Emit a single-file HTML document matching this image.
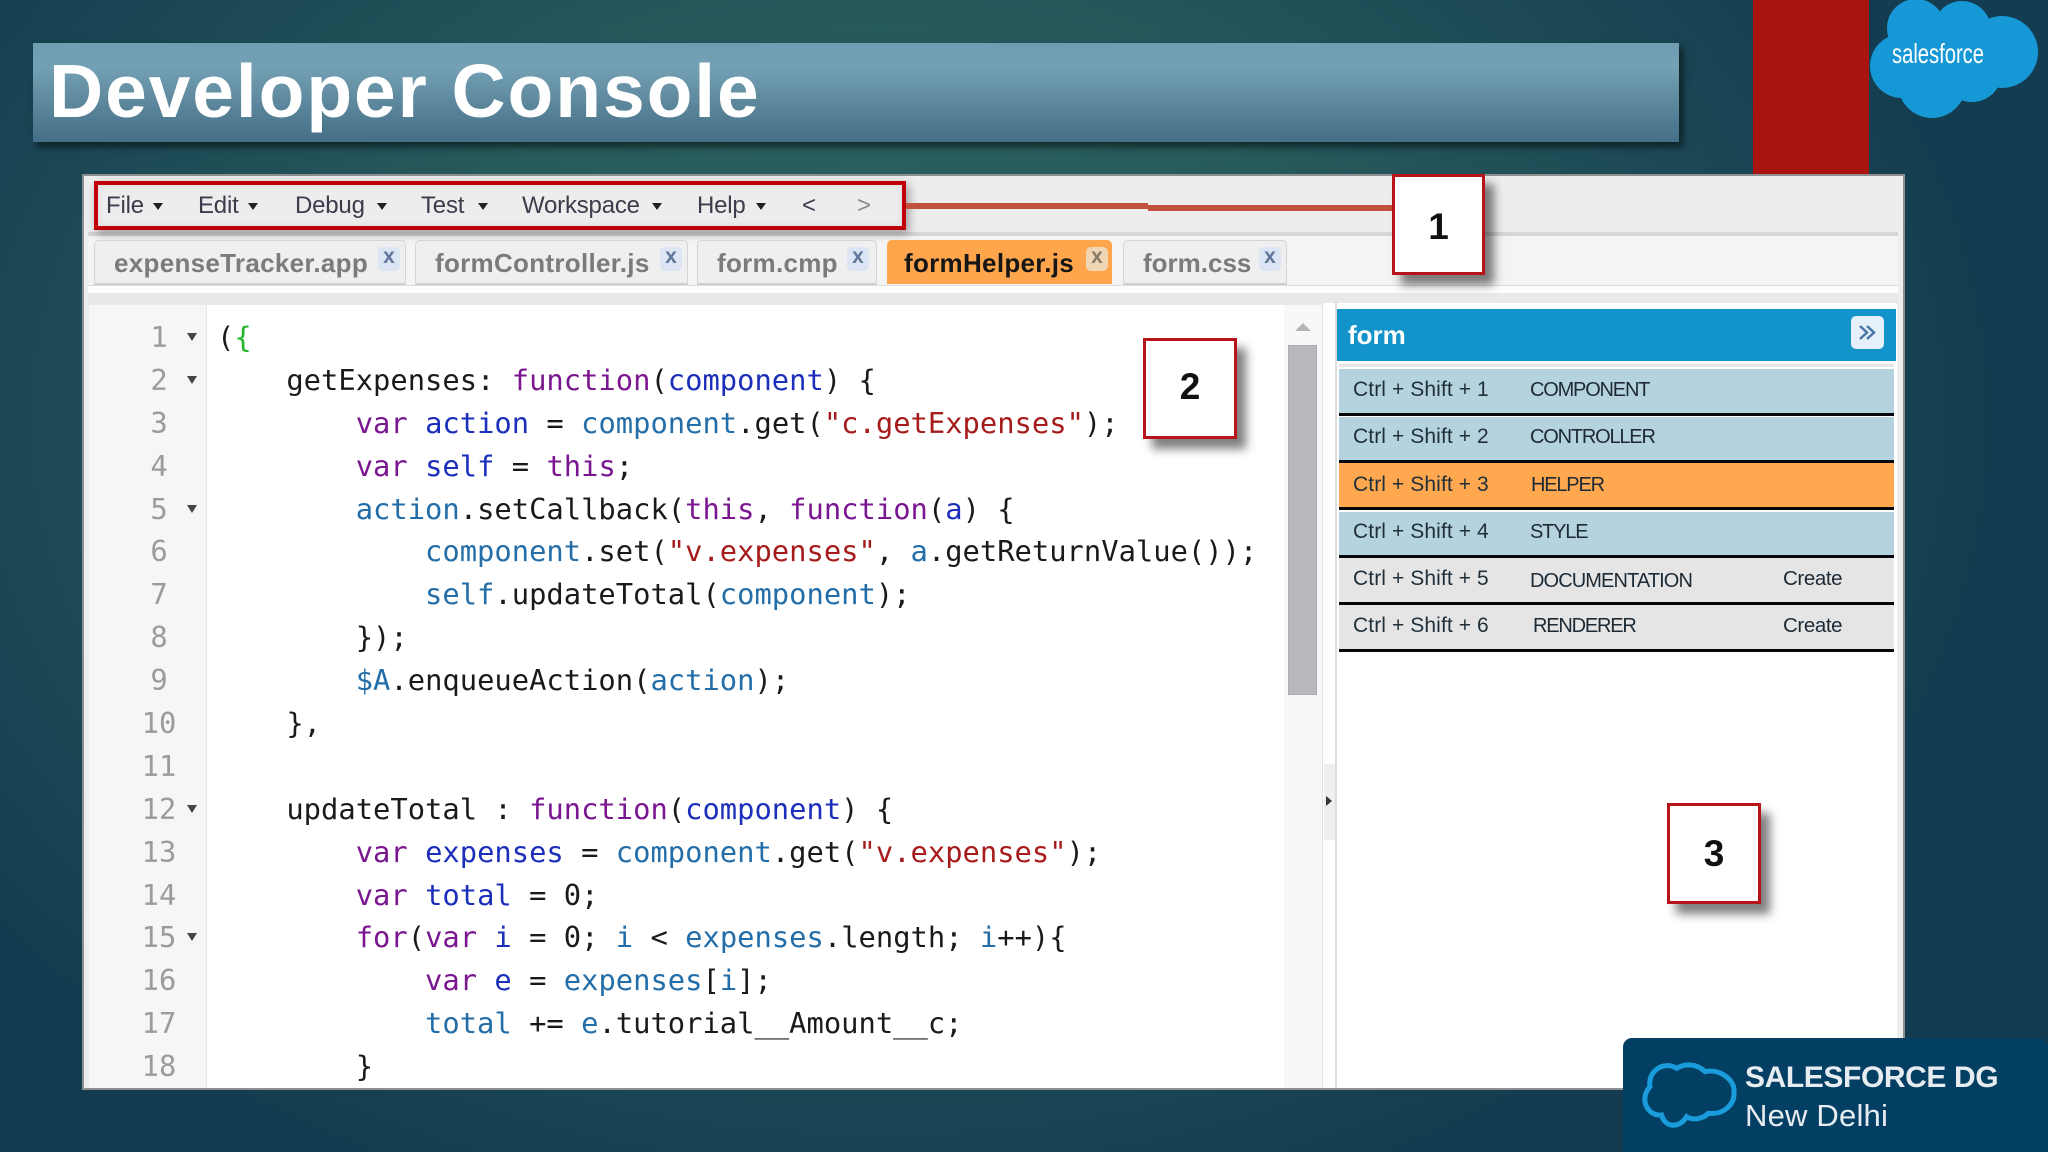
<!DOCTYPE html>
<html lang="en"><head><meta charset="utf-8"><title>Developer Console</title>
<style>
html,body{margin:0;padding:0;width:2048px;height:1152px;overflow:hidden}
body{position:relative;background:radial-gradient(ellipse 1120px 830px at 880px 420px,#2f6664 0,#275a5c 45%,#143c50 100%);font-family:"Liberation Sans",sans-serif}
.a{position:absolute}
.t{position:absolute;white-space:pre;line-height:1}
#title{left:33px;top:43px;width:1646px;height:99px;background:linear-gradient(#6f9db2 0,#73a0b4 25%,#5a8499 65%,#456e88 100%);box-shadow:4px 5px 7px rgba(0,0,0,.55)}
#win{left:82px;top:174px;width:1823px;height:916px;background:#ededed;border:0;box-shadow:inset 0 0 0 2px #8d8f90}
.menu{top:194px;font-size:24px;color:#3c3c4c;letter-spacing:-.2px}
.car{position:absolute;top:203px;width:0;height:0;border-left:5px solid transparent;border-right:5px solid transparent;border-top:7px solid #222}
.tab{position:absolute;top:240px;height:45px;background:#efefef;border:1px solid #d4d4d4;border-bottom:2px solid #cfcfcf;border-radius:5px 5px 0 0;box-sizing:border-box}
.tt{top:250px;font-size:26px;font-weight:bold;color:#7b7b7b;letter-spacing:.3px}
.x{position:absolute;top:247px;width:22px;height:24px;background:#dbe5f4;border-radius:5px;color:#62759a;font-size:21px;font-weight:bold;text-align:center;line-height:20px}
.num{position:absolute;background:#fff;border:3px solid #b8131a;box-sizing:border-box;box-shadow:9px 10px 9px rgba(0,0,0,.5);font-weight:bold;font-size:37px;color:#111;text-align:center}
.l{position:absolute;left:217px;white-space:pre;font-family:"DejaVu Sans Mono","Liberation Mono",monospace;font-size:28.8px;line-height:43px;color:#1a1a1a;margin-top:1px}
.n{position:absolute;width:60px;left:129px;text-align:center;font-family:"DejaVu Sans Mono","Liberation Mono",monospace;font-size:28.8px;line-height:43px;color:#9b9b9b;margin-top:1px}
.f{position:absolute;left:187px;width:0;height:0;border-left:5px solid transparent;border-right:5px solid transparent;border-top:8px solid #444}
.k{color:#7a1790}.v{color:#1c2fbb}.d{color:#236ea8}.s{color:#a61c1c}.g{color:#27b52f}
.row{position:absolute;left:1339px;width:555px;height:46px;border-bottom:3px solid #05070a;box-sizing:content-box}
.ks{position:absolute;left:1353px;font-size:21px;color:#20303a;letter-spacing:.1px;line-height:1}
.lb{position:absolute;left:1530px;font-size:20px;color:#1d2a34;letter-spacing:-1.2px;line-height:1}
.cr{position:absolute;left:1783px;font-size:20.5px;color:#1d2a34;letter-spacing:-.4px;line-height:1}
</style></head><body>

<div class="a" id="title"></div>
<div class="t" style="left:49px;top:54px;font-size:75px;font-weight:bold;color:#fff;letter-spacing:1.9px">Developer Console</div>

<div class="a" style="left:1753px;top:0;width:116px;height:176px;background:#a91410"></div>

<svg class="a" style="left:1860px;top:0" width="188" height="125" viewBox="1860 0 188 125">
<g fill="#1798d6"><circle cx="1916" cy="28" r="29"/><circle cx="1962" cy="30" r="29"/><circle cx="2002" cy="52" r="36"/><circle cx="1972" cy="72" r="30"/><circle cx="1932" cy="84" r="34"/><circle cx="1902" cy="66" r="32"/><rect x="1905" y="30" width="90" height="60"/></g>
<text x="1892" y="63" font-family="Liberation Sans" font-size="28" fill="#fff" textLength="92" lengthAdjust="spacingAndGlyphs">salesforce</text>
</svg>

<div class="a" id="win"></div>

<div class="a" style="left:88px;top:232px;width:1810px;height:4px;background:#d6d6d6"></div>
<div class="a" style="left:88px;top:236px;width:1810px;height:49px;background:#f4f4f4"></div>
<div class="a" style="left:88px;top:285px;width:1810px;height:7px;background:#fdfdfd;border-top:1px solid #ddd"></div>
<div class="a" style="left:88px;top:293px;width:1810px;height:12px;background:#e9e9e9"></div>

<!-- menu -->
<div class="a" style="left:94px;top:181px;width:812px;height:49px;box-sizing:border-box;border:4px solid #c00008;box-shadow:3px 4px 9px rgba(0,0,0,.35),inset 0 0 8px rgba(0,0,0,.08)"></div>
<div class="a" style="left:906px;top:203px;width:242px;height:6px;background:#c2503a"></div>
<div class="a" style="left:1148px;top:205px;width:244px;height:6px;background:#c2503a"></div>
<div class="t menu" style="left:106px">File</div><i class="car" style="left:153px"></i>
<div class="t menu" style="left:198px">Edit</div><i class="car" style="left:248px"></i>
<div class="t menu" style="left:295px">Debug</div><i class="car" style="left:377px"></i>
<div class="t menu" style="left:421px">Test</div><i class="car" style="left:478px"></i>
<div class="t menu" style="left:522px">Workspace</div><i class="car" style="left:652px"></i>
<div class="t menu" style="left:697px">Help</div><i class="car" style="left:756px"></i>
<div class="t menu" style="left:802px">&lt;</div>
<div class="t menu" style="left:857px;color:#8a8a8a">&gt;</div>

<!-- tabs -->
<div class="tab" style="left:94px;width:312px"></div>
<div class="tab" style="left:415px;width:273px"></div>
<div class="tab" style="left:697px;width:180px"></div>
<div class="tab" style="left:887px;width:225px;background:#ffa64d;border:0;height:44px"></div>
<div class="tab" style="left:1123px;width:164px"></div>
<div class="t tt" style="left:114px">expenseTracker.app</div><div class="x" style="left:378px">x</div>
<div class="t tt" style="left:435px">formController.js</div><div class="x" style="left:660px">x</div>
<div class="t tt" style="left:717px">form.cmp</div><div class="x" style="left:847px">x</div>
<div class="t tt" style="left:904px;color:#161616">formHelper.js</div><div class="x" style="left:1086px;background:#f0d6b4;color:#8a7a68">x</div>
<div class="t tt" style="left:1143px;letter-spacing:0">form.css</div><div class="x" style="left:1259px">x</div>

<!-- editor -->
<div class="a" style="left:89px;top:305px;width:117px;height:783px;background:#f6f6f6;border-right:1px solid #e6e6e6"></div>
<div class="a" style="left:207px;top:305px;width:1077px;height:783px;background:#fff"></div>
<div class="a" style="left:1284px;top:305px;width:38px;height:783px;background:#f8f8fa"></div>
<div class="a" style="left:1288px;top:345px;width:29px;height:350px;background:#b9b8bc;box-shadow:inset 0 0 0 1px #aeadb1"></div>
<div class="a" style="left:1295px;top:323px;width:0;height:0;border-left:8px solid transparent;border-right:8px solid transparent;border-bottom:8px solid #b5b5b5"></div>
<div class="a" style="left:1322px;top:303px;width:15px;height:785px;background:#fff;border-left:1px solid #e2e2e2;border-right:2px solid #dcdcdc;box-sizing:border-box"></div>
<div class="a" style="left:1324px;top:764px;width:11px;height:76px;background:#efefef"></div>
<div class="a" style="left:1326px;top:796px;width:0;height:0;border-top:5px solid transparent;border-bottom:5px solid transparent;border-left:6px solid #333"></div>

<div class="n" style="top:315px">1</div><i class="f" style="top:333px"></i>
<div class="n" style="top:358px">2</div><i class="f" style="top:376px"></i>
<div class="n" style="top:401px">3</div>
<div class="n" style="top:444px">4</div>
<div class="n" style="top:487px">5</div><i class="f" style="top:505px"></i>
<div class="n" style="top:529px">6</div>
<div class="n" style="top:572px">7</div>
<div class="n" style="top:615px">8</div>
<div class="n" style="top:658px">9</div>
<div class="n" style="top:701px">10</div>
<div class="n" style="top:744px">11</div>
<div class="n" style="top:787px">12</div><i class="f" style="top:805px"></i>
<div class="n" style="top:830px">13</div>
<div class="n" style="top:873px">14</div>
<div class="n" style="top:915px">15</div><i class="f" style="top:933px"></i>
<div class="n" style="top:958px">16</div>
<div class="n" style="top:1001px">17</div>
<div class="n" style="top:1044px">18</div>

<div class="l" style="top:315px">(<span class="g">{</span></div>
<div class="l" style="top:358px">    getExpenses: <span class="k">function</span>(<span class="v">component</span>) {</div>
<div class="l" style="top:401px">        <span class="k">var</span> <span class="v">action</span> = <span class="d">component</span>.get(<span class="s">"c.getExpenses"</span>);</div>
<div class="l" style="top:444px">        <span class="k">var</span> <span class="v">self</span> = <span class="k">this</span>;</div>
<div class="l" style="top:487px">        <span class="d">action</span>.setCallback(<span class="k">this</span>, <span class="k">function</span>(<span class="v">a</span>) {</div>
<div class="l" style="top:529px">            <span class="d">component</span>.set(<span class="s">"v.expenses"</span>, <span class="d">a</span>.getReturnValue());</div>
<div class="l" style="top:572px">            <span class="d">self</span>.updateTotal(<span class="d">component</span>);</div>
<div class="l" style="top:615px">        });</div>
<div class="l" style="top:658px">        <span class="d">$A</span>.enqueueAction(<span class="d">action</span>);</div>
<div class="l" style="top:701px">    },</div>
<div class="l" style="top:787px">    updateTotal : <span class="k">function</span>(<span class="v">component</span>) {</div>
<div class="l" style="top:830px">        <span class="k">var</span> <span class="v">expenses</span> = <span class="d">component</span>.get(<span class="s">"v.expenses"</span>);</div>
<div class="l" style="top:873px">        <span class="k">var</span> <span class="v">total</span> = 0;</div>
<div class="l" style="top:915px">        <span class="k">for</span>(<span class="k">var</span> <span class="v">i</span> = 0; <span class="d">i</span> &lt; <span class="d">expenses</span>.length; <span class="d">i</span>++){</div>
<div class="l" style="top:958px">            <span class="k">var</span> <span class="v">e</span> = <span class="d">expenses</span>[<span class="d">i</span>];</div>
<div class="l" style="top:1001px">            <span class="d">total</span> += <span class="d">e</span>.tutorial__Amount__c;</div>
<div class="l" style="top:1044px">        }</div>

<!-- right panel -->
<div class="a" style="left:1337px;top:303px;width:560px;height:785px;background:#fff"></div>
<div class="a" style="left:1337px;top:309px;width:559px;height:52px;background:#1293c9"></div>
<div class="t" style="left:1348px;top:321px;font-size:26px;font-weight:bold;color:#fff;margin-top:1px">form</div>
<div class="a" style="left:1851px;top:316px;width:33px;height:33px;background:#e6f0fb;border-radius:5px"></div>
<svg class="a" style="left:1851px;top:316px" width="33" height="33" viewBox="0 0 33 33"><path d="M9 10l7 6.500l-7 6.500M16 10l7 6.500l-7 6.500" fill="none" stroke="#4a76a8" stroke-width="2.500"/></svg>
<div class="a" style="left:1339px;top:364px;width:555px;height:3px;background:#e6e6e6"></div>

<div class="row" style="top:369px;height:44px;background:#b5d3de"></div>
<div class="row" style="top:417px;height:43px;background:#b5d3de"></div>
<div class="row" style="top:463px;height:44px;background:#ffa850"></div>
<div class="row" style="top:512px;height:43px;background:#b5d3de"></div>
<div class="row" style="top:558px;height:44px;background:#e5e5e6"></div>
<div class="row" style="top:605px;height:44px;background:#e5e5e6"></div>

<div class="ks" style="top:379px">Ctrl + Shift + 1</div><div class="lb" style="top:380px">COMPONENT</div>
<div class="ks" style="top:426px">Ctrl + Shift + 2</div><div class="lb" style="top:427px">CONTROLLER</div>
<div class="ks" style="top:474px">Ctrl + Shift + 3</div><div class="lb" style="top:475px;left:1531px">HELPER</div>
<div class="ks" style="top:521px">Ctrl + Shift + 4</div><div class="lb" style="top:522px">STYLE</div>
<div class="ks" style="top:568px">Ctrl + Shift + 5</div><div class="lb" style="top:571px;letter-spacing:-.9px">DOCUMENTATION</div><div class="cr" style="top:569px">Create</div>
<div class="ks" style="top:615px">Ctrl + Shift + 6</div><div class="lb" style="top:616px;left:1533px">RENDERER</div><div class="cr" style="top:616px">Create</div>

<!-- numbered boxes -->
<div class="num" style="left:1392px;top:174px;width:93px;height:101px;line-height:100px">1</div>
<div class="num" style="left:1143px;top:338px;width:94px;height:101px;line-height:92px">2</div>
<div class="num" style="left:1667px;top:803px;width:94px;height:101px;line-height:96px">3</div>

<!-- badge -->
<div class="a" style="left:1623px;top:1038px;width:425px;height:114px;background:#033f63;border-radius:9px 9px 0 0"></div>
<svg class="a" style="left:1623px;top:1038px" width="140" height="114" viewBox="0 0 140 114">
<g transform="translate(-63 -38) scale(.3333)"><path d="M270 260C262 215 310 180 350 205C375 190 410 190 435 215C480 205 525 240 522 275C525 315 490 345 445 340C425 360 395 360 380 350C360 385 315 385 305 345C265 350 235 300 270 260Z" fill="none" stroke="#1a9bdc" stroke-width="15"/></g>
</svg>
<div class="t" style="left:1745px;top:1063px;font-size:30px;font-weight:bold;color:#e6ecf0;letter-spacing:-.4px">SALESFORCE DG</div>
<div class="t" style="left:1745px;top:1100px;font-size:31px;color:#e6ecf0;letter-spacing:.2px">New Delhi</div>
</body></html>
